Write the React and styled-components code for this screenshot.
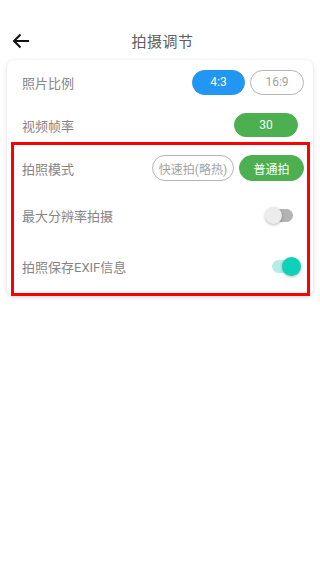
import React, { useState } from 'react'
import styled, { createGlobalStyle } from 'styled-components'

const GlobalStyle = createGlobalStyle`
  html, body {
    margin: 0;
    padding: 0;
    background: #fff;
    font-family: Roboto, "Noto Sans CJK SC", sans-serif;
  }
`

const Page = styled.div`
  width: 320px;
  min-height: 569px;
  background: #fff;
  padding-top: 20px;
  box-sizing: border-box;
`

const Header = styled.div`
  height: 40px;
  display: flex;
  align-items: center;
  position: relative;
  justify-content: center;
`

const Back = styled.button`
  position: absolute;
  left: 10px;
  top: 11px;
  width: 22px;
  height: 20px;
  padding: 0;
  border: 0;
  background: none;
  display: flex;
  align-items: center;
  justify-content: center;
`

const Title = styled.div`
  font-size: 15px;
  color: #5e5e5e;
  letter-spacing: 0.5px;
  margin: 1px 0 0 5px;
`

const Card = styled.div`
  margin: 0 7px;
  background: #fff;
  border-radius: 7px;
  box-shadow: 0 1px 4px rgba(0, 0, 0, 0.16);
`

const Row = styled.div`
  height: ${(p) => p.$h}px;
  padding: ${(p) => p.$top || 0}px ${(p) => p.$right}px 0 ${(p) => p.$left}px;
  display: flex;
  align-items: center;
  justify-content: space-between;
  box-sizing: border-box;
`

const Label = styled.div`
  font-size: 13px;
  color: #858585;
`

const Options = styled.div`
  display: flex;
  gap: 5px;
`

const Pill = styled.button`
  width: ${(p) => p.$w}px;
  height: ${(p) => p.$ht || 25}px;
  border-radius: 13px;
  font-family: inherit;
  font-size: 12px;
  padding: 0;
  box-sizing: border-box;
  color: ${(p) => (p.$bg ? '#fff' : '#a3a3a3')};
  background: ${(p) => p.$bg || '#fff'};
  border: 1px solid ${(p) => p.$bg || '#b5b5b5'};
`

const Marked = styled.div`
  margin: 0 3px -7px 4px;
  border: 3px solid #ff0000;
`

const Track = styled.div`
  width: ${(p) => p.$w}px;
  height: 13px;
  border-radius: 7px;
  background: ${(p) => (p.$on ? '#b4efe6' : '#b3b3b3')};
  display: flex;
  align-items: center;
  justify-content: ${(p) => (p.$on ? 'flex-end' : 'flex-start')};
`

const Thumb = styled.div`
  width: ${(p) => p.$d}px;
  height: ${(p) => p.$d}px;
  border-radius: 50%;
  flex-shrink: 0;
  margin: 0 ${(p) => (p.$on ? '-4px' : '0')} 0 ${(p) => (p.$on ? '0' : '-5px')};
  background: ${(p) => (p.$on ? '#0fd1b8' : '#ececec')};
  box-shadow: 0 1px 3px rgba(0, 0, 0, 0.28);
`

function Switch({ on, w }) {
  return (
    <Track $on={on} $w={w}>
      <Thumb $on={on} $d={on ? 19 : 17} />
    </Track>
  )
}

export default function App() {
  const [ratio, setRatio] = useState('4:3')
  const [mode, setMode] = useState('normal')

  return (
    <Page>
      <GlobalStyle />
      <Header>
        <Back aria-label="back">
          <svg width="18" height="16" viewBox="0 0 18 16" fill="none">
            <path d="M17 8H2M8.5 1.5L2 8l6.5 6.5" stroke="#111" strokeWidth="2" />
          </svg>
        </Back>
        <Title>拍摄调节</Title>
      </Header>
      <Card>
        <Row $h={44} $left={15} $right={9}>
          <Label>照片比例</Label>
          <Options>
            <Pill $w={53} $bg={ratio === '4:3' ? '#2196f3' : null} onClick={() => setRatio('4:3')}>4:3</Pill>
            <Pill $w={54} $bg={ratio === '16:9' ? '#2196f3' : null} onClick={() => setRatio('16:9')}>16:9</Pill>
          </Options>
        </Row>
        <Row $h={38} $top={4} $left={15} $right={15}>
          <Label>视频帧率</Label>
          <Pill $w={64} $ht={24} $bg="#4caf50">30</Pill>
        </Row>
        <Marked>
          <Row $h={46} $left={8} $right={3}>
            <Label>拍照模式</Label>
            <Options>
              <Pill $w={82} $ht={26} $bg={mode === 'fast' ? '#4caf50' : null} onClick={() => setMode('fast')}>快速拍(略热)</Pill>
              <Pill $w={65} $ht={26} $bg={mode === 'normal' ? '#4caf50' : null} onClick={() => setMode('normal')}>普通拍</Pill>
            </Options>
          </Row>
          <Row $h={48} $left={8} $right={14}>
            <Label>最大分辨率拍摄</Label>
            <Switch w={23} on={false} />
          </Row>
          <Row $h={54} $left={8} $right={10}>
            <Label>拍照保存EXIF信息</Label>
            <Switch w={25} on />
          </Row>
        </Marked>
      </Card>
    </Page>
  )
}
